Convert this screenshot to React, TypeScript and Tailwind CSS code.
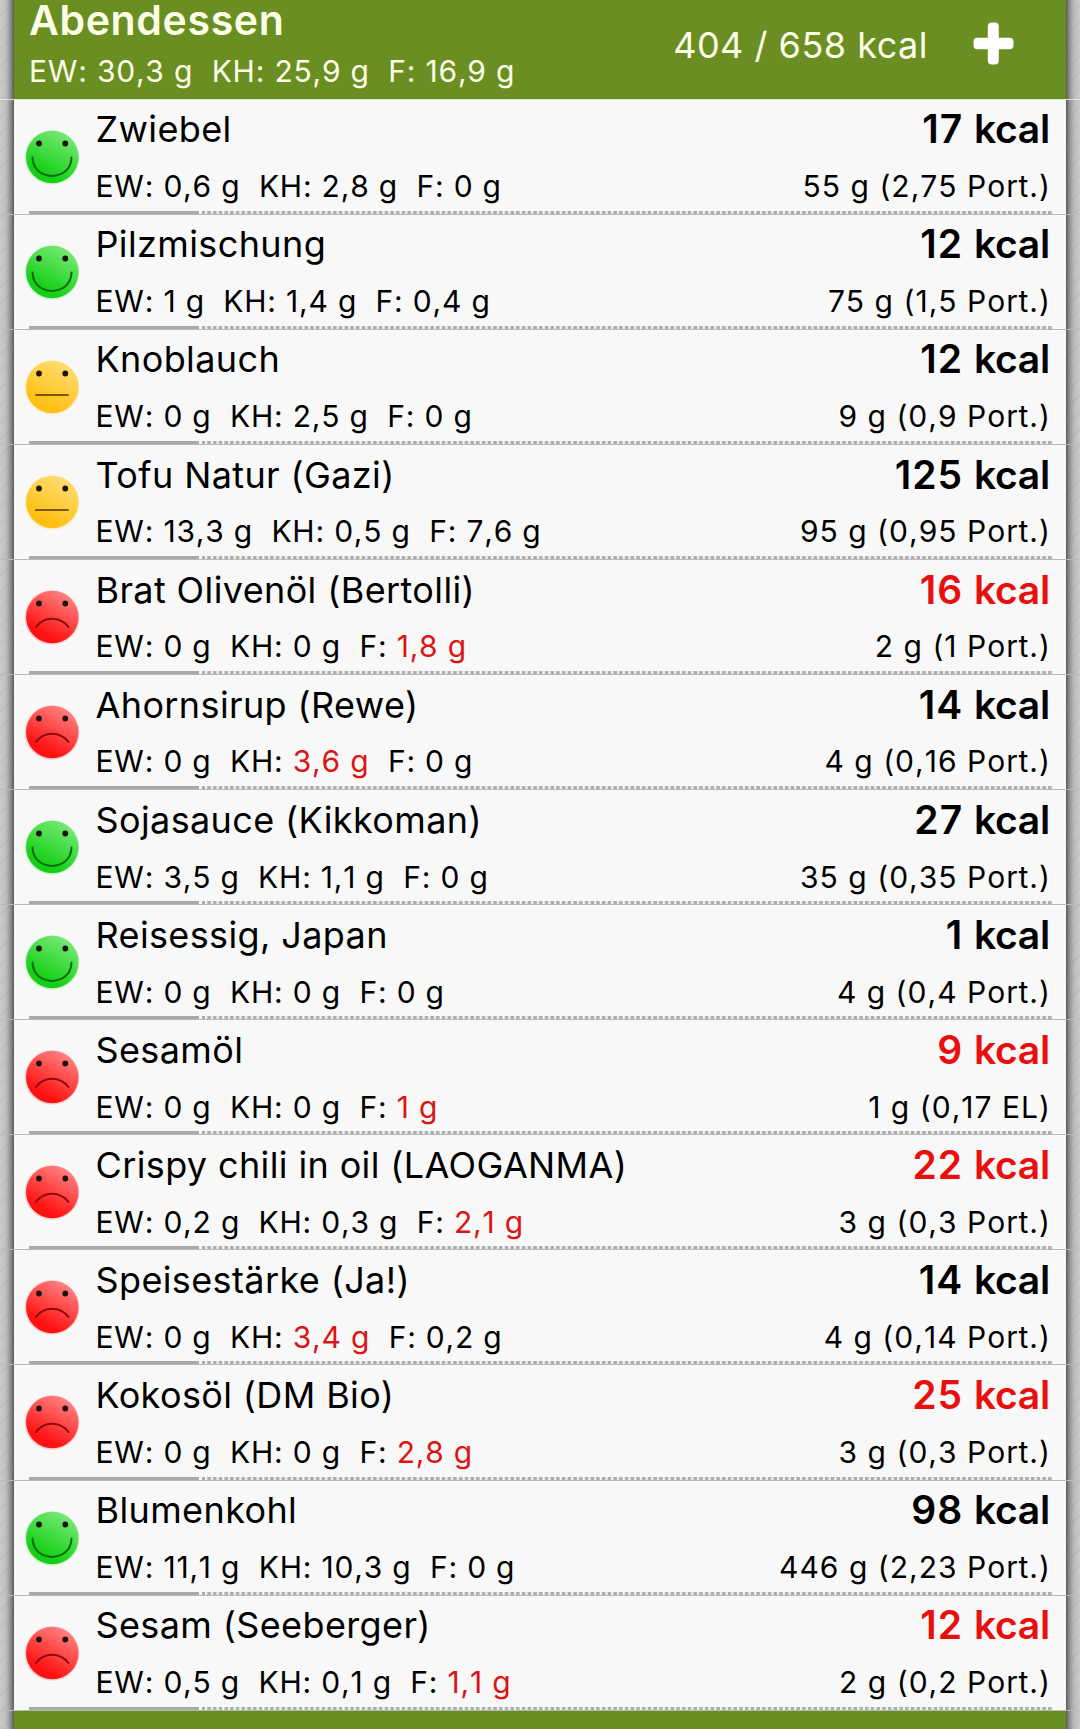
import { useId } from "react";

type Mood = "good" | "neutral" | "bad";
type Alert = "kh" | "f";

interface Food {
  name: string;
  mood: Mood;
  ew: string;
  kh: string;
  f: string;
  kcal: number;
  portion: string;
  alert?: Alert;
  over?: boolean;
}

const foods: Food[] = [
  { name: "Zwiebel", mood: "good", ew: "0,6", kh: "2,8", f: "0", kcal: 17, portion: "55 g (2,75 Port.)" },
  { name: "Pilzmischung", mood: "good", ew: "1", kh: "1,4", f: "0,4", kcal: 12, portion: "75 g (1,5 Port.)" },
  { name: "Knoblauch", mood: "neutral", ew: "0", kh: "2,5", f: "0", kcal: 12, portion: "9 g (0,9 Port.)" },
  { name: "Tofu Natur (Gazi)", mood: "neutral", ew: "13,3", kh: "0,5", f: "7,6", kcal: 125, portion: "95 g (0,95 Port.)" },
  { name: "Brat Olivenöl (Bertolli)", mood: "bad", ew: "0", kh: "0", f: "1,8", kcal: 16, portion: "2 g (1 Port.)", alert: "f", over: true },
  { name: "Ahornsirup (Rewe)", mood: "bad", ew: "0", kh: "3,6", f: "0", kcal: 14, portion: "4 g (0,16 Port.)", alert: "kh" },
  { name: "Sojasauce (Kikkoman)", mood: "good", ew: "3,5", kh: "1,1", f: "0", kcal: 27, portion: "35 g (0,35 Port.)" },
  { name: "Reisessig, Japan", mood: "good", ew: "0", kh: "0", f: "0", kcal: 1, portion: "4 g (0,4 Port.)" },
  { name: "Sesamöl", mood: "bad", ew: "0", kh: "0", f: "1", kcal: 9, portion: "1 g (0,17 EL)", alert: "f", over: true },
  { name: "Crispy chili in oil (LAOGANMA)", mood: "bad", ew: "0,2", kh: "0,3", f: "2,1", kcal: 22, portion: "3 g (0,3 Port.)", alert: "f", over: true },
  { name: "Speisestärke (Ja!)", mood: "bad", ew: "0", kh: "3,4", f: "0,2", kcal: 14, portion: "4 g (0,14 Port.)", alert: "kh" },
  { name: "Kokosöl (DM Bio)", mood: "bad", ew: "0", kh: "0", f: "2,8", kcal: 25, portion: "3 g (0,3 Port.)", alert: "f", over: true },
  { name: "Blumenkohl", mood: "good", ew: "11,1", kh: "10,3", f: "0", kcal: 98, portion: "446 g (2,23 Port.)" },
  { name: "Sesam (Seeberger)", mood: "bad", ew: "0,5", kh: "0,1", f: "1,1", kcal: 12, portion: "2 g (0,2 Port.)", alert: "f", over: true },
];

const faces: Record<Mood, { from: string; to: string; ink: string; mouth: string }> = {
  good: { from: "#74e874", to: "#14d014", ink: "#0b6b12", mouth: "M8.5 28.5C9 53 47 53 47.5 28.5" },
  neutral: { from: "#ffdc70", to: "#ffc014", ink: "#7a5a08", mouth: "M12 36H44" },
  bad: { from: "#ff8080", to: "#ff1212", ink: "#8a0c0c", mouth: "M12 38C20 27 36 27 44.5 38" },
};

function Face({ mood }: { mood: Mood }) {
  const id = useId();
  const face = faces[mood];
  return (
    <svg className="h-[56px] w-[56px] shrink-0" viewBox="0 0 56 56" fill="none">
      <defs>
        <linearGradient id={id} x1="0.8" y1="0.1" x2="0.4" y2="0.85">
          <stop stopColor={face.from} />
          <stop offset="1" stopColor={face.to} />
        </linearGradient>
      </defs>
      <circle cx="28" cy="28.5" r="27.3" fill={face.to} opacity="0.18" />
      <circle cx="28.3" cy="28" r="26.3" fill={`url(#${id})`} />
      <circle cx="15" cy="14.5" r="2.9" fill="#1c1608" />
      <circle cx="41.3" cy="14.5" r="2.9" fill="#1c1608" />
      <path d={face.mouth} stroke={face.ink} strokeWidth="2" strokeLinecap="round" />
    </svg>
  );
}

function Macros({ ew, kh, f, alert }: Pick<Food, "ew" | "kh" | "f" | "alert">) {
  return (
    <p className="text-[30px] leading-[36px] tracking-[0.8px] whitespace-pre [font-kerning:none]">
      EW: {ew} g{"  "}KH: <span className={alert === "kh" ? "text-[#dc1414]" : ""}>{kh} g</span>
      {"  "}F: <span className={alert === "f" ? "text-[#dc1414]" : ""}>{f} g</span>
    </p>
  );
}

function Row({ food }: { food: Food }) {
  return (
    <li className="relative flex h-[115.09px] items-start border-b border-[#b9b9b9] pr-[29px] pl-[24px]">
      <div className="pt-[29px]">
        <Face mood={food.mood} />
      </div>
      <div className="flex grow flex-col pl-[15.5px]">
        <p className="pt-[7.7px] text-[36px] leading-[44px] tracking-[0.38px]">{food.name}</p>
        <div className="pt-[16.8px]">
          <Macros ew={food.ew} kh={food.kh} f={food.f} alert={food.alert} />
        </div>
      </div>
      <div className="flex flex-col items-end whitespace-nowrap">
        <p className={`pt-[7.7px] pr-[1.2px] text-[39px] leading-[44px] font-semibold tracking-[1px] ${food.over ? "text-[#e80f0f]" : ""}`}>
          {food.kcal} <span className="tracking-[-0.3px]">kcal</span>
        </p>
        <p className="pt-[16.8px] text-[30px] leading-[36px] tracking-[1.02px] [font-kerning:none]">{food.portion}</p>
      </div>
      <div className="absolute right-[27px] bottom-0 left-[29px] flex h-[3px] gap-[3px]">
        <div className="w-[170px] bg-[#a9a9a9]" />
        <div className="grow bg-[repeating-linear-gradient(90deg,#aeaeae_0_2.6px,#f0f0f0_3.4px_4.9px,#aeaeae_5.72px)]" />
      </div>
    </li>
  );
}

export default function App() {
  return (
    <main className="h-[1729px] w-[1080px] overflow-hidden bg-[linear-gradient(90deg,#00000000_0,#00000010_6px,#00000050_11px,#00000090_14px,#f8f8f8_14px,#f8f8f8_1066px,#00000090_1066px,#00000050_1069px,#00000014_1074px,#00000000_1080px),repeating-linear-gradient(135deg,#cbcbcb_0_10px,#c0c0c0_11px,#cbcbcb_12px)] font-[Inter,sans-serif] text-black">
      <div className="h-[99.6px] border-b border-[#dfe3d5] px-[14px]">
        <header className="flex h-full items-start bg-[#6b8e23] pl-[15px] text-[#fbffe8]">
          <div className="grow">
            <h1 className="text-[41px] leading-[40px] font-semibold tracking-[0.65px]">Abendessen</h1>
            <div className="pt-[13px]">
              <Macros ew="30,3" kh="25,9" f="16,9" />
            </div>
          </div>
          <p className="pt-[23px] text-[36px] leading-[44px] tracking-[0.5px]">404 / 658 kcal</p>
          <svg className="mt-[22px] mr-[52px] ml-[45px] h-[43px] w-[41px]" viewBox="0 0 41 43">
            <rect x="14.8" y="0.5" width="11" height="42" rx="4" fill="#fff" />
            <rect x="0.5" y="15.8" width="40" height="11.5" rx="4" fill="#fff" />
          </svg>
        </header>
      </div>
      <ul>
        {foods.map((food) => (
          <Row key={food.name} food={food} />
        ))}
      </ul>
      <div className="mx-[14px] h-[20px] bg-[#6b8e23]" />
    </main>
  );
}
